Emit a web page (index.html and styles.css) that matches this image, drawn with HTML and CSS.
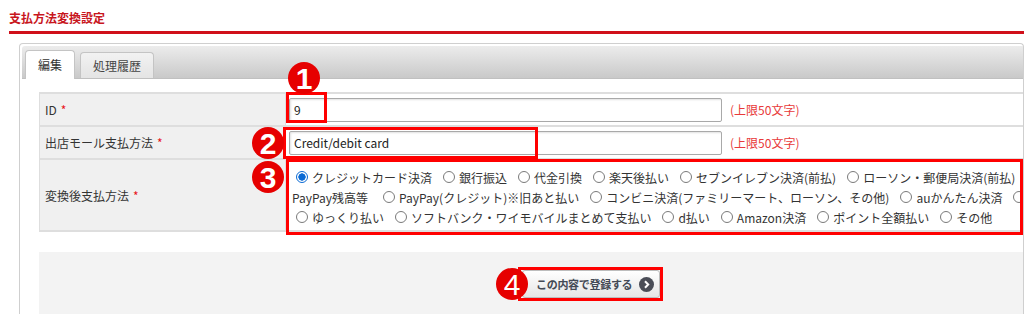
FILE: index.html
```html
<!DOCTYPE html>
<html lang="ja">
<head>
<meta charset="utf-8">
<title>支払方法変換設定</title>
<link rel="stylesheet" href="styles.css">
</head>
<body>
<div class="page">
  <h1 class="title">支払方法変換設定</h1>
  <div class="panel">
    <div class="tabbar">
      <div class="tab active">編集</div>
      <div class="tab">処理履歴</div>
    </div>
    <div class="content">
      <div class="form">
        <div class="label row-a">ID <span class="req">*</span></div>
        <div class="value row-a">
          <input class="text" type="text" value="9">
          <span class="limit">(上限50文字)</span>
        </div>
        <div class="label row-b">出店モール支払方法 <span class="req">*</span></div>
        <div class="value row-b">
          <input class="text" type="text" value="Credit/debit card">
          <span class="limit">(上限50文字)</span>
        </div>
        <div class="label row-c">変換後支払方法 <span class="req">*</span></div>
        <div class="value row-c radios">
          <div class="line">
            <label class="opt first"><span class="radio checked"></span>クレジットカード決済</label>
            <label class="opt"><span class="radio"></span>銀行振込</label>
            <label class="opt"><span class="radio"></span>代金引換</label>
            <label class="opt"><span class="radio"></span>楽天後払い</label>
            <label class="opt"><span class="radio"></span>セブンイレブン決済(前払)</label>
            <label class="opt"><span class="radio"></span>ローソン・郵便局決済(前払)</label>
          </div>
          <div class="line">
            <span class="cont">PayPay残高等</span>
            <label class="opt wide"><span class="radio"></span>PayPay(クレジット)※旧あと払い</label>
            <label class="opt"><span class="radio"></span>コンビニ決済(ファミリーマート、ローソン、その他)</label>
            <label class="opt"><span class="radio"></span>auかんたん決済</label>
            <label class="opt"><span class="radio"></span></label>
          </div>
          <div class="line">
            <label class="opt first"><span class="radio"></span>ゆっくり払い</label>
            <label class="opt"><span class="radio"></span>ソフトバンク・ワイモバイルまとめて支払い</label>
            <label class="opt"><span class="radio"></span>d払い</label>
            <label class="opt"><span class="radio"></span>Amazon決済</label>
            <label class="opt"><span class="radio"></span>ポイント全額払い</label>
            <label class="opt"><span class="radio"></span>その他</label>
          </div>
        </div>
      </div>
      <div class="actions">
        <button class="submit" type="button">この内容で登録する<span class="go"><svg width="15" height="15" viewBox="0 0 15 15"><circle cx="7.5" cy="7.5" r="7.5" fill="#4a4d57"/><path d="M6 4.2 L9.2 7.5 L6 10.8" fill="none" stroke="#fff" stroke-width="2"/></svg></span></button>
      </div>
    </div>
  </div>

  <div class="mark box1"></div>
  <div class="mark box2"></div>
  <div class="mark box3"></div>
  <div class="mark box4"></div>
  <div class="num n1">1</div>
  <div class="num n2">2</div>
  <div class="num n3">3</div>
  <div class="num n4">4</div>
</div>
</body>
</html>
```

FILE: styles.css
```css
html, body {
  margin: 0;
  padding: 0;
  background: #fff;
}
body {
  width: 1024px;
  height: 314px;
  overflow: hidden;
  font-family: "Noto Sans CJK JP", "Noto Sans", sans-serif;
  font-size: 12px;
  color: #333;
}
.page {
  position: relative;
  padding-left: 9px;
  height: 314px;
  overflow: hidden;
}
.title {
  margin: 0;
  padding-top: 10px;
  padding-bottom: 6px;
  font-size: 12px;
  line-height: 15px;
  font-weight: bold;
  color: #c8161d;
  border-bottom: 3px solid #d0101a;
}
.panel {
  margin: 9px 0 0 10px;
  border: 1px solid #cfcfcf;
  border-bottom: none;
  border-radius: 4px 4px 0 0;
  padding: 2px 0 0 2px;
}
.tabbar {
  height: 33px;
  display: flex;
  align-items: flex-end;
  gap: 5px;
  padding-left: 3px;
  border-radius: 3px 0 0 0;
  background: linear-gradient(#ececec, #c9c9c9);
  border-bottom: 1px solid #c0c0c0;
  box-sizing: border-box;
}
.tab {
  height: 25px;
  line-height: 25px;
  padding: 0 12px;
  background: linear-gradient(#f2f2f2, #e4e4e4);
  border: 1px solid #c4c4c4;
  border-bottom: none;
  border-radius: 4px 4px 0 0;
  color: #444;
}
.tab.active {
  height: 28px;
  line-height: 27px;
  background: #fff;
  margin-bottom: -1px;
  color: #333;
}
.content {
  padding: 13px 0 0 17px;
}
.form {
  display: grid;
  grid-template-columns: 246px 1fr;
  border-top: 2px solid #dedede;
  border-left: 1px solid #dedede;
}
.label {
  background: #f0f0f0;
  padding-left: 5px;
  display: flex;
  align-items: center;
  border-bottom: 2px solid #dedede;
  border-right: 1px solid #dedede;
  box-sizing: border-box;
}
.req {
  color: #e8141c;
  margin-left: 4px;
}
.value {
  border-bottom: 2px solid #dedede;
  display: flex;
  align-items: center;
  padding-left: 3px;
  overflow: hidden;
  box-sizing: border-box;
}
.row-a { height: 33px; }
.row-b { height: 33px; }
.row-c { height: 72px; }
.text {
  width: 433px;
  height: 24px;
  box-sizing: border-box;
  border: 1px solid #a9a9a9;
  border-radius: 2px;
  box-shadow: inset 1px 1px 2px rgba(0,0,0,0.12);
  padding: 0 4px;
  font-family: "Noto Sans CJK JP", "Noto Sans", sans-serif;
  font-size: 12px;
  color: #222;
  background: #fff;
}
.limit {
  color: #e83a3a;
  margin-left: 8px;
}
.radios {
  flex-direction: column;
  align-items: stretch;
  justify-content: flex-start;
  padding: 7px 0 0 6px;
}
.line {
  display: flex;
  align-items: center;
  height: 20px;
  white-space: nowrap;
}
.opt {
  display: flex;
  align-items: center;
  margin-left: 11px;
}
.opt.first { margin-left: 4px; }
.opt.wide { margin-left: 15px; }
.radio {
  width: 12px;
  height: 12px;
  box-sizing: border-box;
  border: 1px solid #7a7a7a;
  border-radius: 50%;
  background: #fff;
  margin-right: 4px;
  flex: none;
}
.radio.checked {
  border-color: #0b6ad4;
  background: radial-gradient(circle, #0b6ad4 0 3.4px, #fff 3.9px);
}
.actions {
  margin-top: 20px;
  background: #f3f3f3;
  height: 62px;
  padding: 18px 0 0 483px;
  box-sizing: border-box;
}
.submit {
  height: 28px;
  width: 138px;
  display: flex;
  align-items: center;
  padding: 0 0 0 13px;
  border: 1px solid #bdbdbd;
  border-radius: 3px;
  background: linear-gradient(#ffffff, #e6e6e6);
  font-family: "Noto Sans CJK JP", "Noto Sans", sans-serif;
  font-size: 11px;
  font-weight: bold;
  color: #444a55;
  letter-spacing: -0.3px;
}
.go {
  display: flex;
  margin-left: 7px;
}
.mark {
  position: absolute;
  border: 3px solid #f00;
  box-sizing: border-box;
}
.box1 { left: 286px; top: 92px; width: 41px; height: 31px; }
.box2 { left: 283px; top: 127px; width: 255px; height: 32px; }
.box3 { left: 286px; top: 159px; width: 737px; height: 76px; }
.box4 { left: 518px; top: 267px; width: 145px; height: 34px; }
.num {
  position: absolute;
  width: 32px;
  height: 32px;
  border-radius: 50%;
  background: #e60000;
  color: #fff;
  font-family: "Liberation Sans", Arial, sans-serif;
  font-weight: bold;
  font-size: 30px;
  line-height: 33px;
  text-align: center;
}
.n1 { left: 288px; top: 62px; }
.n2 { left: 252px; top: 127px; }
.n3 { left: 252px; top: 161px; }
.n4 { left: 496px; top: 268px; font-weight: normal; }
```
